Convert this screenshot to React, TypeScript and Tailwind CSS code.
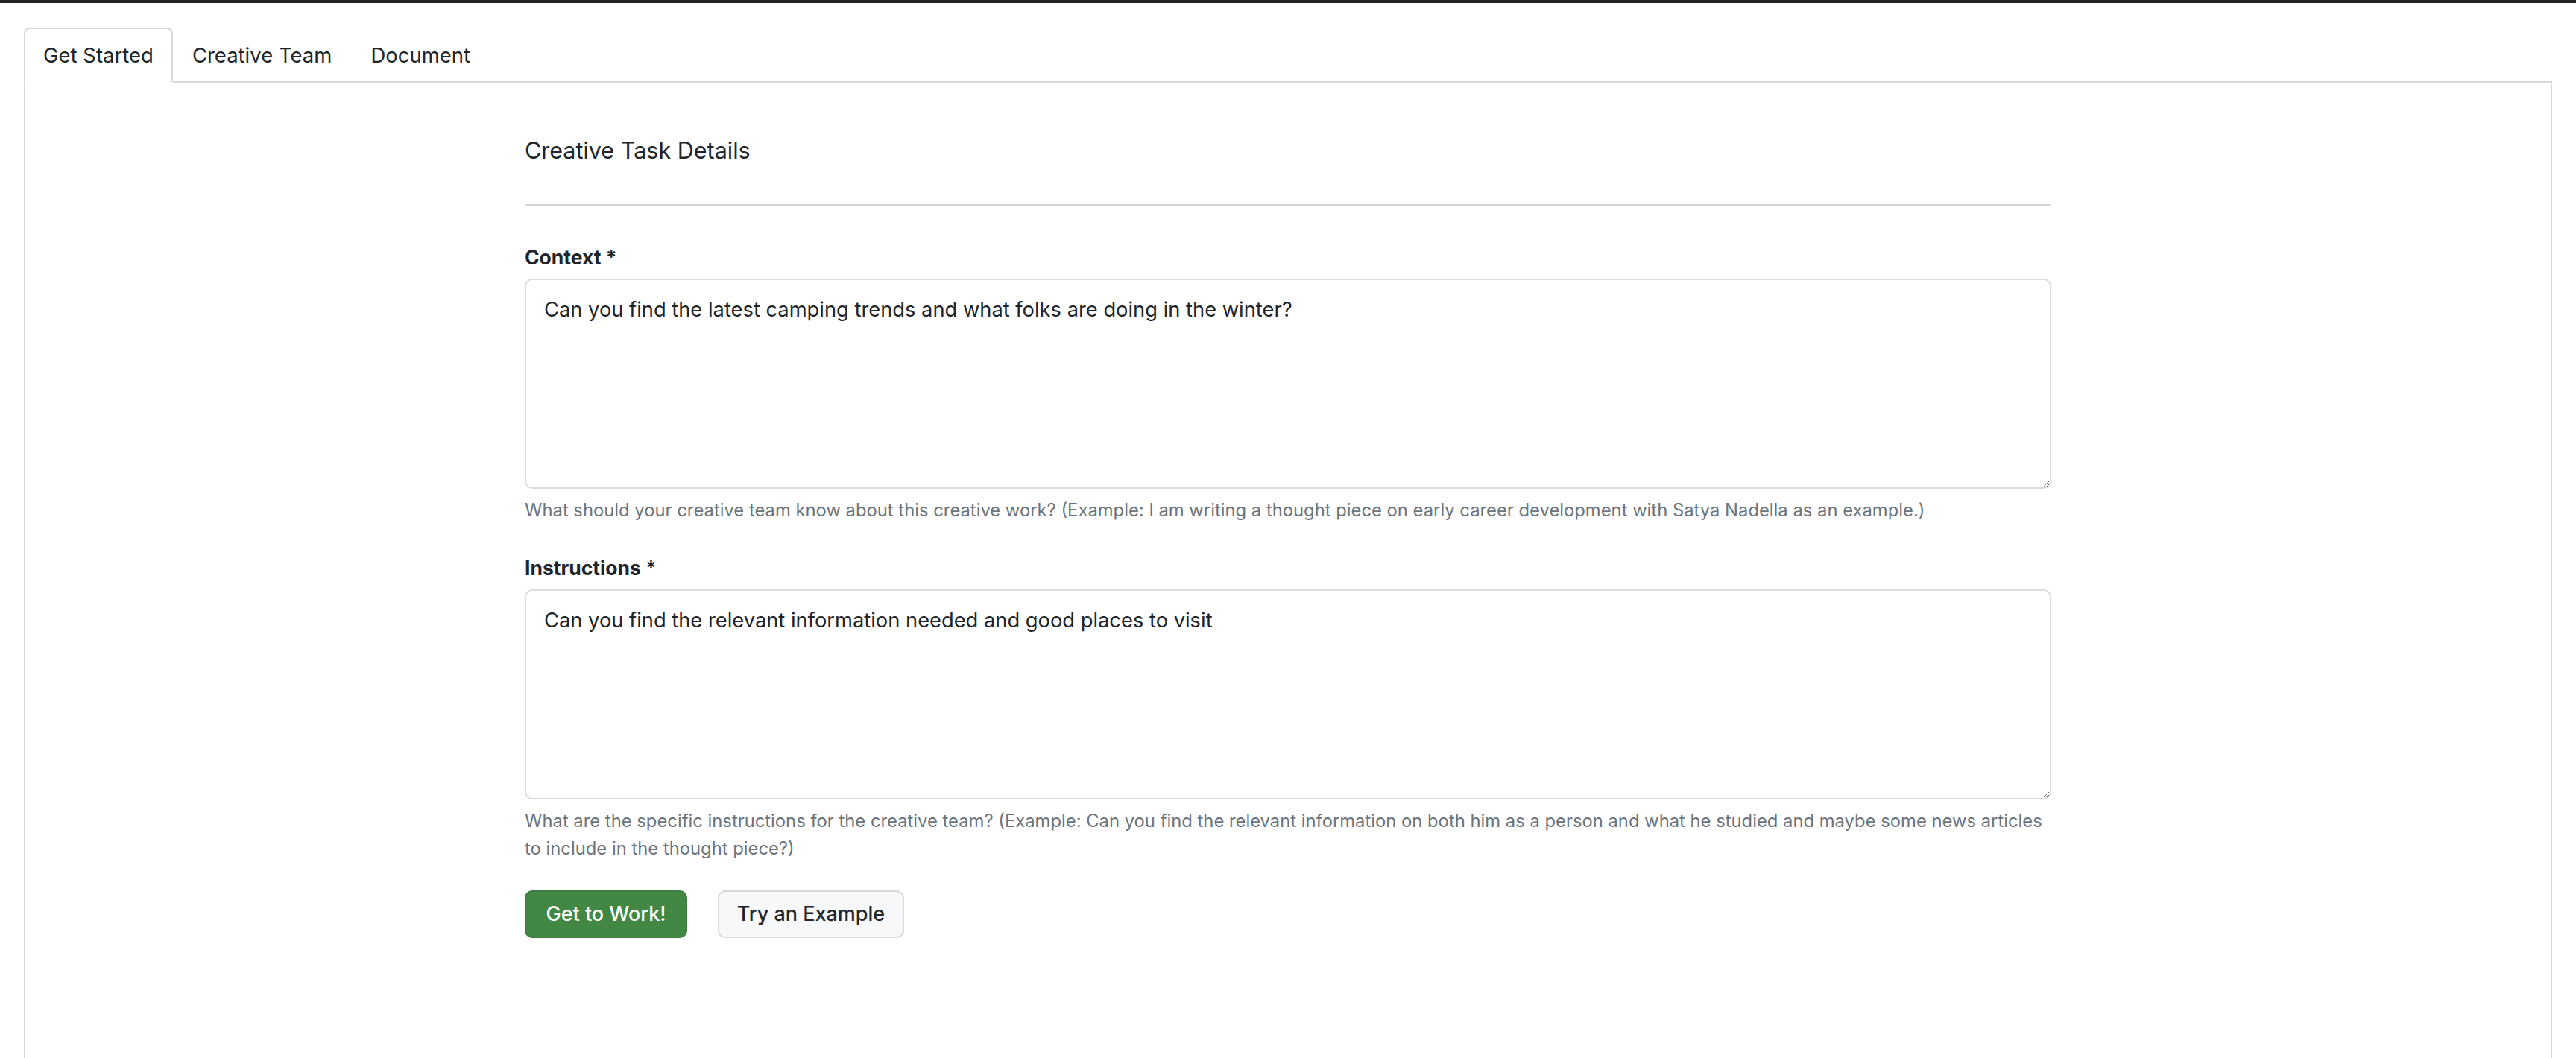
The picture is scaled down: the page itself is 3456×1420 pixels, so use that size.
import { useState } from "react"

const tabs = ["Get Started", "Creative Team", "Document"]

const contextHelp =
  "What should your creative team know about this creative work? (Example: I am writing a thought piece on early career development with Satya Nadella as an example.)"
const instructionsHelp =
  "What are the specific instructions for the creative team? (Example: Can you find the relevant information on both him as a person and what he studied and maybe some news articles to include in the thought piece?)"

type FieldProps = {
  label: string
  value: string
  help: string
  onChange: (v: string) => void
}

const Field = ({ label, value, help, onChange }: FieldProps) => (
  <div className="flex flex-col">
    <label className="text-[26.5px] leading-[32px] font-bold text-[#212529]">{label}</label>
    <textarea
      className="mt-[13px] h-[282px] w-full rounded-[10px] border-2 border-[#dadde1] bg-white pl-[24px] pr-[24px] pt-[19px] text-[27.3px] leading-[42px] text-[#212529] outline-none"
      value={value}
      onChange={(e) => onChange(e.target.value)}
    />
    <p className="mt-[10px] text-[23.8px] leading-[37px] text-[#6c757d]">{help}</p>
  </div>
)

export default function App() {
  const [active, setActive] = useState(0)
  const [context, setContext] = useState(
    "Can you find the latest camping trends and what folks are doing in the winter?"
  )
  const [instructions, setInstructions] = useState(
    "Can you find the relevant information needed and good places to visit"
  )

  return (
    <div className="h-screen overflow-hidden bg-white font-['Inter',sans-serif] text-[#212529]">
      <div className="h-[4px] bg-[#212529]" />

      <div className="mx-[32px] mt-[33px]">
        {/* tab strip */}
        <ul className="flex border-b-2 border-[#d6dadf]">
          {tabs.map((t, i) => (
            <li key={t} className="-mb-[2px]">
              <button
                onClick={() => setActive(i)}
                className={
                  i === active
                    ? "rounded-t-[8px] border-2 border-[#d6dadf] border-b-white bg-white px-[24px] pt-[14px] pb-[14px] text-[27.5px] leading-[42px] text-[#212529]"
                    : "rounded-t-[8px] border-2 border-transparent px-[24px] pt-[14px] pb-[14px] text-[27.5px] leading-[42px] text-[#212529]"
                }
              >
                {t}
              </button>
            </li>
          ))}
        </ul>

        {/* tab panel */}
        <div className="h-[1400px] border-2 border-t-0 border-[#d6dadf]">
          <div className="mx-auto w-[2048px] pt-[73px]">
            <h5 className="text-[30.5px] leading-[36px] text-[#212529]">Creative Task Details</h5>
            <hr className="mt-[54px] border-t-2 border-[#d3d5d7]" />

            <div className="mt-[53px]">
              <Field label="Context *" value={context} help={contextHelp} onChange={setContext} />
            </div>
            <div className="mt-[43px]">
              <Field
                label="Instructions *"
                value={instructions}
                help={instructionsHelp}
                onChange={setInstructions}
              />
            </div>

            <div className="mt-[38px] flex gap-[41px]">
              <button className="h-[64px] w-[218px] rounded-[10px] border-2 border-[#3b7d3e] bg-[#438744] text-[27px] font-medium text-white">
                Get to Work!
              </button>
              <button className="h-[64px] w-[250px] rounded-[10px] border-2 border-[#d6d9dc] bg-[#f7f8f9] text-[27px] font-medium text-[#212529]">
                Try an Example
              </button>
            </div>
          </div>
        </div>
      </div>
    </div>
  )
}
